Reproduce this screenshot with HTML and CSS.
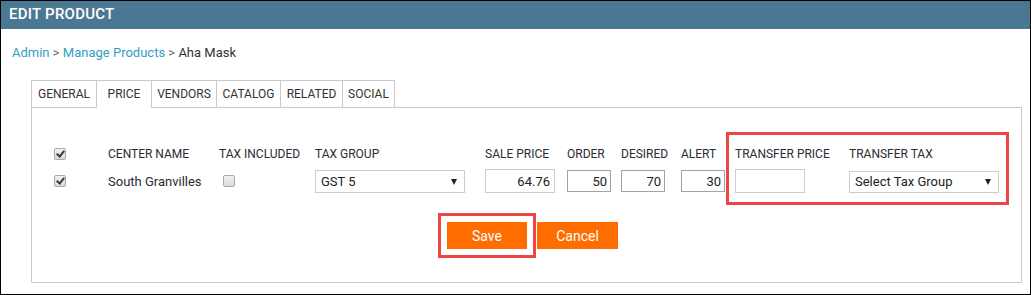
FILE: index.html
```html
<!DOCTYPE html>
<html lang="en">
<head>
<meta charset="utf-8">
<title>Edit Product</title>
<link rel="stylesheet" href="styles.css">
</head>
<body>
<div class="frame">
  <div class="titlebar">EDIT PRODUCT</div>
  <div class="breadcrumb">
    <a class="crumb-link" href="#">Admin</a> <span class="sep">&gt;</span> <a class="crumb-link" href="#">Manage Products</a> <span class="sep">&gt;</span> <span class="crumb-current">Aha Mask</span>
  </div>
  <ul class="tabs">
    <li class="tab tab-general">GENERAL</li>
    <li class="tab tab-price tab-active">PRICE</li>
    <li class="tab tab-vendors">VENDORS</li>
    <li class="tab tab-catalog">CATALOG</li>
    <li class="tab tab-related">RELATED</li>
    <li class="tab tab-social">SOCIAL</li>
  </ul>
  <div class="panel">
    <div class="price-grid">
      <div class="cell r1 c1"><input type="checkbox" class="chk" checked></div>
      <div class="cell r1 c2 label">CENTER NAME</div>
      <div class="cell r1 c3 label">TAX INCLUDED</div>
      <div class="cell r1 c4 label">TAX GROUP</div>
      <div class="cell r1 c5 label">SALE PRICE</div>
      <div class="cell r1 c6 label">ORDER</div>
      <div class="cell r1 c7 label">DESIRED</div>
      <div class="cell r1 c8 label">ALERT</div>
      <div class="cell r1 c9 label">TRANSFER PRICE</div>
      <div class="cell r1 c10 label">TRANSFER TAX</div>

      <div class="cell r2 c1"><input type="checkbox" class="chk" checked></div>
      <div class="cell r2 c2 center-name">South Granvilles</div>
      <div class="cell r2 c3"><input type="checkbox" class="chk chk-incl"></div>
      <div class="cell r2 c4">
        <div class="select-wrap">
          <select class="select"><option>GST 5</option></select>
        </div>
      </div>
      <div class="cell r2 c5"><input class="num num-wide" type="text" value="64.76"></div>
      <div class="cell r2 c6"><input class="num num-small" type="text" value="50"></div>
      <div class="cell r2 c7"><input class="num num-small" type="text" value="70"></div>
      <div class="cell r2 c8"><input class="num num-small" type="text" value="30"></div>
      <div class="cell r2 c9"><input class="num num-wide" type="text" value=""></div>
      <div class="cell r2 c10">
        <div class="select-wrap select-transfer">
          <select class="select"><option>Select Tax Group</option></select>
        </div>
      </div>

      <div class="highlight"></div>
    </div>
    <div class="actions">
      <button class="btn btn-save" type="button">Save</button>
      <button class="btn" type="button">Cancel</button>
    </div>
  </div>
</div>
</body>
</html>
```

FILE: styles.css
```css
html, body {
  margin: 0;
  padding: 0;
  background: #ffffff;
}

body {
  font-family: Roboto, "Liberation Sans", Arial, sans-serif;
  color: #333333;
}

.frame {
  width: 1031px;
  height: 295px;
  box-sizing: border-box;
  border: 1px solid #000000;
  overflow: hidden;
}

.titlebar {
  height: 28px;
  line-height: 26px;
  background: #4a7892;
  color: #ffffff;
  font-size: 15px;
  font-weight: 500;
  letter-spacing: 0.25px;
  padding-left: 8px;
}

.breadcrumb {
  margin-top: 16px;
  padding-left: 11px;
  font-size: 13px;
  line-height: 16px;
  height: 16px;
}

.crumb-link {
  color: #2f9fc4;
  text-decoration: none;
}

.sep {
  color: #666666;
}

.crumb-current {
  color: #333333;
}

.tabs {
  list-style: none;
  margin: 19px 0 0 30px;
  padding: 0;
  display: flex;
  position: relative;
  z-index: 1;
}

.tab {
  box-sizing: border-box;
  height: 28px;
  margin-bottom: -1px;
  line-height: 26px;
  padding: 0;
  text-align: center;
  font-size: 12px;
  color: #333333;
  border: 1px solid #c9c9c9;
  background: #ffffff;
  white-space: nowrap;
}

.tab + .tab {
  margin-left: -1px;
}

.tab-general { width: 66px; }
.tab-price { width: 56px; }
.tab-vendors { width: 66px; }
.tab-catalog { width: 65px; }
.tab-related { width: 63px; }
.tab-social { width: 53px; }

.tab-active {
  border-bottom-color: #ffffff;
}

.panel {
  margin: 0 8px 0 30px;
  border: 1px solid #c9c9c9;
  padding: 39px 0 33px 22px;
}

.price-grid {
  display: grid;
  grid-template-columns: 54px 111px 96px 170px 82px 54px 60px 54px 114px 150px;
  grid-template-rows: 14px 24px;
  row-gap: 8px;
  align-items: center;
}

.r1 { grid-row: 1; }
.r2 { grid-row: 2; }
.c1 { grid-column: 1; }
.c2 { grid-column: 2; }
.c3 { grid-column: 3; }
.c4 { grid-column: 4; }
.c5 { grid-column: 5; }
.c6 { grid-column: 6; }
.c7 { grid-column: 7; }
.c8 { grid-column: 8; }
.c9 { grid-column: 9; }
.c10 { grid-column: 10; }

.cell {
  display: flex;
  align-items: center;
  white-space: nowrap;
}

.label {
  font-size: 12px;
  line-height: 14px;
  color: #2b2b33;
}

.center-name {
  font-size: 13px;
  color: #2b2b33;
}

.chk {
  -webkit-appearance: none;
  appearance: none;
  box-sizing: border-box;
  width: 12px;
  height: 12px;
  margin: 0;
  border: 1px solid #a9a9a9;
  border-radius: 2px;
  background: linear-gradient(#f0f0f0, #dcdcdc);
}

.chk:checked::after {
  content: "";
  display: block;
  width: 3px;
  height: 6px;
  margin: 0 0 0 3px;
  border: solid #3a3a3a;
  border-width: 0 2px 2px 0;
  transform: rotate(40deg);
}

.chk-incl {
  margin-left: 4px;
}

.select-wrap {
  position: relative;
  width: 150px;
}

.select-wrap::after {
  content: "";
  position: absolute;
  right: 8px;
  top: 9px;
  border-left: 3.5px solid transparent;
  border-right: 3.5px solid transparent;
  border-top: 6px solid #222222;
  pointer-events: none;
}

.select {
  -webkit-appearance: none;
  appearance: none;
  box-sizing: border-box;
  display: block;
  width: 150px;
  height: 23px;
  margin: 0;
  padding: 0 20px 0 5px;
  border: 1px solid #cccccc;
  border-radius: 0;
  background: #ffffff;
  font-family: Roboto, "Liberation Sans", Arial, sans-serif;
  font-size: 13px;
  color: #222222;
}

.select-transfer .select {
  height: 22px;
  margin-top: 1px;
}

.num {
  box-sizing: border-box;
  margin: 0;
  padding: 0 3px 0 2px;
  border: 1px solid #a3a3a3;
  border-radius: 0;
  background: #ffffff;
  font-family: Roboto, "Liberation Sans", Arial, sans-serif;
  font-size: 13px;
  color: #222222;
  text-align: right;
  outline: none;
}

.num-wide {
  width: 70px;
  height: 24px;
  border-color: #cccccc;
  padding-right: 4px;
}

.num-small {
  width: 44px;
  height: 22px;
}

.highlight {
  grid-column: 9 / 11;
  grid-row: 1 / 3;
  align-self: stretch;
  justify-self: stretch;
  margin: -15px -10px -12px -9px;
  border: 3px solid #ee4444;
  pointer-events: none;
}

.actions {
  display: flex;
  justify-content: center;
  gap: 10px;
  margin-top: 29px;
  padding-right: 10px;
}

.btn {
  box-sizing: border-box;
  height: 27px;
  width: 81px;
  margin: 0;
  border: none;
  border-radius: 0;
  background: #ff6c00;
  color: #ffffff;
  font-family: Roboto, "Liberation Sans", Arial, sans-serif;
  font-size: 14px;
  padding: 0;
}

.btn-save {
  width: 80px;
  outline: 3px solid #ee4444;
  outline-offset: 6px;
}
```
